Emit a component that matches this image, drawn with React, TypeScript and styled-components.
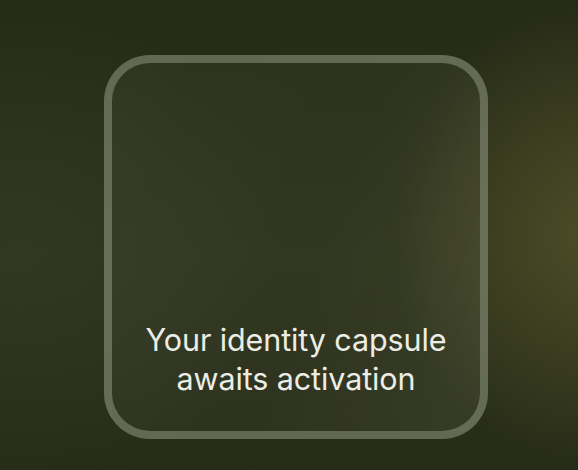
import React from "react";
import styled, { createGlobalStyle } from "styled-components";

const GlobalStyle = createGlobalStyle`
  html, body {
    margin: 0;
    padding: 0;
    width: 100%;
    height: 100%;
    overflow: hidden;
  }

  body {
    background-color: #282e19;
    font-family: Inter, "Noto Sans", sans-serif;
  }
`;

const Screen = styled.div`
  width: 578px;
  height: 470px;
  box-sizing: border-box;
  padding: 55px 0 0 104px;
  background:
    radial-gradient(ellipse 200px 230px at 590px 235px, rgba(78, 77, 40, 0.95), rgba(78, 77, 40, 0) 100%),
    radial-gradient(ellipse 260px 240px at 20px 250px, rgba(52, 58, 36, 0.7), rgba(52, 58, 36, 0) 100%),
    linear-gradient(180deg, #262b17 0%, #2b3119 55%, #272c18 100%);
`;

const Capsule = styled.div`
  width: 384px;
  height: 384px;
  box-sizing: border-box;
  border: 8px solid rgba(140, 150, 125, 0.55);
  border-radius: 46px;
  background: linear-gradient(
    110deg,
    rgba(255, 255, 255, 0.04) 0%,
    rgba(255, 255, 255, 0.03) 55%,
    rgba(255, 255, 240, 0.07) 100%
  );
  display: flex;
  flex-direction: column;
  justify-content: flex-end;
  align-items: center;
  padding-bottom: 33px;
`;

const Caption = styled.p`
  margin: 0;
  color: #ecede4;
  font-size: 30.5px;
  line-height: 39px;
  font-weight: 400;
  text-align: center;
  letter-spacing: -0.1px;
`;

export default function App() {
  return (
    <>
      <GlobalStyle />
      <Screen>
        <Capsule>
          <Caption>
            Your identity capsule
            <br />
            awaits activation
          </Caption>
        </Capsule>
      </Screen>
    </>
  );
}
